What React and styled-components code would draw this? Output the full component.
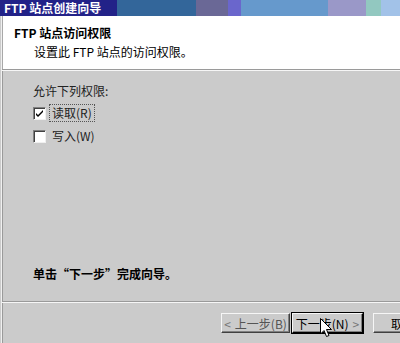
import React from "react";
import styled, { createGlobalStyle } from "styled-components";

const Global = createGlobalStyle`
  html, body { margin: 0; padding: 0; background: #cbcbcb; }
  body { font-family: "Noto Sans CJK SC", "Liberation Sans", sans-serif; font-size: 12px; color: #000; }
`;

const Screen = styled.div`
  position: relative;
  width: 400px;
  height: 343px;
  overflow: hidden;
  display: flex;
  flex-direction: column;
  background: #cbcbcb;
`;

const TitleBar = styled.div`
  height: 16px;
  display: flex;
  flex-shrink: 0;
`;

const Band = styled.div`
  width: ${(p) => p.$w}px;
  flex: ${(p) => (p.$grow ? 1 : "none")};
  background: ${(p) => p.$c};
  display: flex;
  align-items: center;
`;

const TitleText = styled.span`
  color: #fff;
  font-weight: 700;
  font-size: 12px;
  line-height: 16px;
  padding-left: 4px;
  white-space: nowrap;
`;

const Window = styled.div`
  flex: 1;
  display: flex;
  flex-direction: column;
  border-left: 1px solid #f0f0f0;
  box-shadow: inset 1px 0 0 #9a9a9a;
  margin-left: 1px;
`;

const Header = styled.div`
  height: 53px;
  background: #fff;
  display: flex;
  flex-direction: column;
  padding: 9px 0 0 11px;
  box-sizing: border-box;
  gap: 4px;
  border-left: 1px solid #a8a8a8;
`;

const HeaderTitle = styled.div`
  font-weight: 700;
  line-height: 15px;
  white-space: nowrap;
`;

const HeaderSub = styled.div`
  padding-left: 20px;
  line-height: 15px;
  white-space: nowrap;
`;

const Rule = styled.div`
  height: 0;
  border-top: 1px solid #9a9a9a;
  border-bottom: 1px solid #f6f6f6;
  flex-shrink: 0;
`;

const Content = styled.div`
  flex: 1;
  display: flex;
  flex-direction: column;
  padding: 12px 0 0 31px;
  box-sizing: border-box;
`;

const Label = styled.div`
  line-height: 15px;
  color: #222;
  white-space: nowrap;
`;

const Options = styled.div`
  display: flex;
  flex-direction: column;
  gap: 9px;
  margin-top: 8px;
`;

const Option = styled.div`
  display: flex;
  align-items: center;
  gap: 3px;
  height: 14px;
`;

const Box = styled.div`
  width: 11px;
  height: 11px;
  background: #fff;
  border-top: 1px solid #808080;
  border-left: 1px solid #808080;
  border-right: 1px solid #f0f0f0;
  border-bottom: 1px solid #f0f0f0;
  box-shadow: inset 1px 1px 0 #404040;
  display: flex;
  align-items: center;
  justify-content: center;
`;

const OptText = styled.span`
  line-height: 14px;
  padding: 1px 2px;
  color: #222;
  white-space: nowrap;
  border: 1px ${(p) => (p.$focus ? "dotted #555" : "solid transparent")};
`;

const Spacer = styled.div`
  flex: 1;
`;

const Finish = styled.div`
  font-weight: 700;
  line-height: 15px;
  white-space: nowrap;
  margin-bottom: 20px;
`;

const ButtonBar = styled.div`
  height: 40px;
  display: flex;
  align-items: flex-start;
  padding: 10px 0 0 219px;
  box-sizing: border-box;
  flex-shrink: 0;
`;

const Button = styled.div`
  width: ${(p) => p.$w}px;
  height: 20px;
  box-sizing: border-box;
  margin-left: ${(p) => p.$ml || 0}px;
  flex-shrink: 0;
  display: flex;
  align-items: center;
  justify-content: ${(p) => p.$justify || "center"};
  gap: 4px;
  padding: 0 ${(p) => (p.$pl != null ? p.$pl : 4)}px;
  background: #cbcbcb;
  border-top: 1px solid #f6f6f6;
  border-left: 1px solid #f6f6f6;
  border-right: 1px solid ${(p) => (p.$default ? "#000" : "#404040")};
  border-bottom: 1px solid ${(p) => (p.$default ? "#000" : "#404040")};
  box-shadow: ${(p) =>
    p.$default
      ? "0 0 0 1px #000, inset -1px -1px 0 #808080"
      : "inset -1px -1px 0 #808080"};
  color: ${(p) => (p.$muted ? "#555" : "#000")};
  white-space: nowrap;
  overflow: hidden;
  font-size: 12px;
`;

const Arrow = styled.span`
  color: #777;
`;

const Cursor = styled.svg`
  position: absolute;
  left: 320px;
  top: 318px;
`;

export default function App() {
  return (
    <Screen>
      <Global />
      <TitleBar>
        <Band $w={117} $c="#222288">
          <TitleText>FTP 站点创建向导</TitleText>
        </Band>
        <Band $w={79} $c="#33669a" />
        <Band $w={32} $c="#6a6896" />
        <Band $w={13} $c="#6a66cc" />
        <Band $w={87} $c="#6699cc" />
        <Band $w={38} $c="#9a98c8" />
        <Band $w={15} $c="#92c8c0" />
        <Band $grow $c="#a2c2e8" />
      </TitleBar>
      <Window>
        <Header>
          <HeaderTitle>FTP 站点访问权限</HeaderTitle>
          <HeaderSub>设置此 FTP 站点的访问权限。</HeaderSub>
        </Header>
        <Rule />
        <Content>
          <Label>允许下列权限:</Label>
          <Options>
            <Option>
              <Box>
                <svg width="9" height="9" viewBox="0 0 9 9">
                  <path d="M1 4 L3 6 L8 1 L8 3 L3 8 L1 6 Z" fill="#000" />
                </svg>
              </Box>
              <OptText $focus>读取(R)</OptText>
            </Option>
            <Option>
              <Box />
              <OptText>写入(W)</OptText>
            </Option>
          </Options>
          <Spacer />
          <Finish>单击“下一步”完成向导。</Finish>
        </Content>
        <Rule />
        <ButtonBar>
          <Button $w={69} $muted>
            <Arrow>&lt;</Arrow>上一步(B)
          </Button>
          <Button $w={71} $ml={2} $default>
            下一步(N)<Arrow>&gt;</Arrow>
          </Button>
          <Button $w={75} $ml={10} $justify="flex-start" $pl={17}>
            取消
          </Button>
        </ButtonBar>
      </Window>
      <Cursor width="13" height="21" viewBox="0 0 13 21">
        <path
          d="M0.5 0.5 L0.5 16 L4 12.5 L6.5 18.5 L9 17.5 L6.5 11.5 L11.5 11.5 Z"
          fill="#fff"
          stroke="#000"
          strokeWidth="1"
        />
      </Cursor>
    </Screen>
  );
}
